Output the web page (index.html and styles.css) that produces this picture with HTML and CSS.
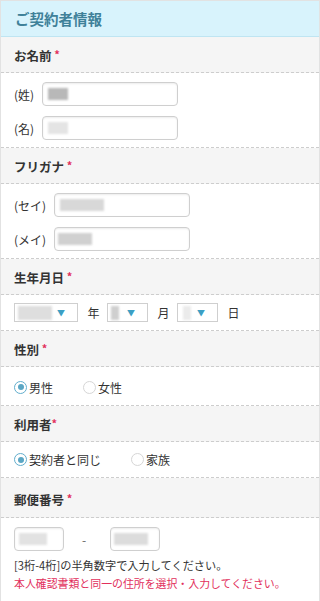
FILE: index.html
```html
<!DOCTYPE html>
<html lang="ja">
<head>
  <meta charset="UTF-8">
  <meta name="viewport" content="width=device-width, initial-scale=1.0">
  <title>ご契約者情報</title>
  <link rel="stylesheet" href="styles.css">
</head>
<body>
  <div class="form">
    <h2 class="form-title">ご契約者情報</h2>

    <div class="label">お名前 <span class="req">*</span></div>
    <div class="field rows">
      <div class="row"><span class="row-name">(姓)</span><div class="input wide"><span class="blur b1"></span></div></div>
      <div class="row"><span class="row-name">(名)</span><div class="input wide"><span class="blur b2"></span></div></div>
    </div>

    <div class="label">フリガナ <span class="req">*</span></div>
    <div class="field rows">
      <div class="row"><span class="row-name kana">(セイ)</span><div class="input wide"><span class="blur b3"></span></div></div>
      <div class="row"><span class="row-name kana">(メイ)</span><div class="input wide"><span class="blur b4"></span></div></div>
    </div>

    <div class="label">生年月日 <span class="req">*</span></div>
    <div class="field date">
      <div class="select year"><span class="blur b5"></span><span class="arrow">▼</span></div>
      <span class="unit">年</span>
      <div class="select small"><span class="blur b6"></span><span class="arrow">▼</span></div>
      <span class="unit">月</span>
      <div class="select small"><span class="blur b7"></span><span class="arrow">▼</span></div>
      <span class="unit">日</span>
    </div>

    <div class="label">性別 <span class="req">*</span></div>
    <div class="field radios tall">
      <label class="radio"><span class="dot checked"></span>男性</label>
      <label class="radio"><span class="dot"></span>女性</label>
    </div>

    <div class="label">利用者<span class="req">*</span></div>
    <div class="field radios">
      <label class="radio"><span class="dot checked"></span>契約者と同じ</label>
      <label class="radio"><span class="dot"></span>家族</label>
    </div>

    <div class="label postal-label">郵便番号 <span class="req">*</span></div>
    <div class="field postal">
      <div class="zip">
        <div class="input short"><span class="blur b8"></span></div>
        <span class="dash">-</span>
        <div class="input short"><span class="blur b9"></span></div>
      </div>
      <p class="note">[3桁-4桁]の半角数字で入力してください。</p>
      <p class="note warn">本人確認書類と同一の住所を選択・入力してください。</p>
    </div>
  </div>
</body>
</html>
```

FILE: styles.css
```css
body {
  margin: 0;
  font-family: "Noto Sans CJK JP", "Noto Sans", sans-serif;
  color: #333;
  background: #fff;
}
.form {
  border: 1px solid #e2e2e2;
  border-bottom: none;
  min-height: 600px;
}
.form-title {
  margin: 0;
  height: 35px;
  line-height: 35px;
  padding-left: 14px;
  font-size: 14.5px;
  font-weight: bold;
  color: #3f8199;
  background: #d8f3fc;
  border-bottom: 1px solid #bfe5f2;
}
.label {
  height: 35px;
  line-height: 35px;
  padding-left: 13px;
  font-size: 12.5px;
  font-weight: bold;
  background: #f5f5f5;
  border-bottom: 1px dashed #cdcdcd;
}
.postal-label {
  height: 39px;
  line-height: 41px;
}
.req {
  color: #e2305c;
  font-size: 11px;
  vertical-align: 2px;
}
.field {
  border-bottom: 1px dashed #cdcdcd;
  padding: 0 13px;
  font-size: 12px;
}
.rows {
  padding-top: 9px;
  padding-bottom: 7px;
  display: flex;
  flex-direction: column;
  gap: 10px;
}
.row {
  display: flex;
  align-items: center;
}
.row-name {
  width: 28px;
}
.row-name.kana {
  width: 40px;
}
.input {
  position: relative;
  height: 22px;
  border: 1px solid #cfcfcf;
  border-radius: 4px;
  box-shadow: inset 0 1px 2px rgba(0,0,0,0.08);
  background: #fff;
}
.input.wide {
  width: 134px;
}
.input.short {
  width: 48px;
}
.blur {
  position: absolute;
  top: 5px;
  height: 12px;
  background: #c9c9c9;
  filter: blur(1px);
}
.b1 { left: 5px; width: 20px; background: #b8b8b8; }
.b2 { left: 5px; width: 20px; background: #e4e4e4; }
.b3 { left: 5px; width: 44px; background: #d8d8d8; }
.b4 { left: 3px; width: 34px; background: #d0d0d0; }
.b5 { left: 3px; width: 34px; height: 14px; top: 2px; background: #dedede; }
.b6 { left: 3px; width: 8px; height: 14px; top: 2px; background: #cfcfcf; }
.b7 { left: 5px; width: 8px; height: 14px; top: 2px; background: #ebebeb; }
.b8 { left: 4px; width: 28px; background: #e2e2e2; }
.b9 { left: 3px; width: 34px; background: #dcdcdc; }
.date {
  height: 35px;
  display: flex;
  align-items: center;
}
.select {
  position: relative;
  height: 17px;
  border: 1px solid #cfcfcf;
  background: #fff;
}
.select.year {
  width: 62px;
}
.select.small {
  width: 39px;
}
.arrow {
  position: absolute;
  right: 12px;
  top: 3px;
  font-size: 8px;
  color: #3c9fc4;
}
.unit {
  width: 27px;
  padding-left: 2px;
  text-align: center;
}
.radios {
  height: 35px;
  display: flex;
  align-items: center;
  gap: 30px;
}
.radios.tall {
  height: 39px;
  padding-top: 2px;
  box-sizing: border-box;
}
.radio {
  display: flex;
  align-items: center;
}
.dot {
  width: 13px;
  height: 13px;
  border: 1px solid #d6d6d6;
  border-radius: 50%;
  margin-right: 2px;
  box-sizing: border-box;
  display: flex;
  align-items: center;
  justify-content: center;
}
.dot.checked {
  border-color: #62aecd;
}
.dot.checked::after {
  content: "";
  width: 6px;
  height: 6px;
  border-radius: 50%;
  background: #5aa6c4;
}
.postal {
  border-bottom: none;
  padding-top: 9px;
}
.zip {
  display: flex;
  align-items: center;
}
.dash {
  width: 40px;
  padding-right: 6px;
  text-align: center;
  color: #666;
}
.note {
  margin: 0;
  font-size: 11.2px;
  line-height: 18px;
}
.zip + .note {
  margin-top: 5px;
}
.warn {
  font-size: 10.9px;
  color: #e2305c;
}
```
